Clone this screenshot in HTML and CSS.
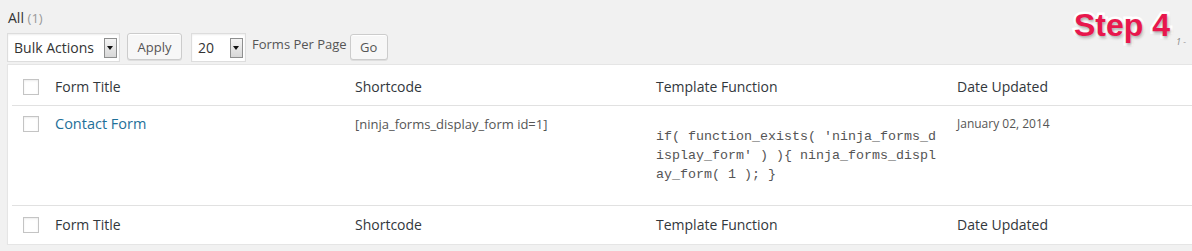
FILE: index.html
```html
<!DOCTYPE html>
<html>
<head>
<meta charset="utf-8">
<title>Forms</title>
<link rel="stylesheet" href="styles.css">
</head>
<body>
<div class="wrap">
  <div class="views">All <span class="count">(1)</span></div>

  <div class="tablenav">
    <div class="select bulk"><span>Bulk Actions</span><i class="drop"></i></div>
    <button class="button apply" type="button">Apply</button>
    <div class="select per-page"><span>20</span><i class="drop"></i></div>
    <span class="per-label">Forms Per Page</span>
    <button class="button go" type="button">Go</button>
  </div>

  <div class="step">Step 4</div>
  <span class="displaying">1 -</span>

  <div class="card">
    <table class="list">
      <colgroup>
        <col class="c-check">
        <col class="c-title">
        <col class="c-short">
        <col class="c-func">
        <col class="c-date">
      </colgroup>
      <thead>
        <tr>
          <th class="check"><span class="box"></span></th>
          <th>Form Title</th>
          <th>Shortcode</th>
          <th>Template Function</th>
          <th>Date Updated</th>
        </tr>
      </thead>
      <tbody>
        <tr>
          <td class="check"><span class="box"></span></td>
          <td><a class="title" href="#">Contact Form</a></td>
          <td class="short">[ninja_forms_display_form id=1]</td>
          <td><code class="func">if( function_exists( 'ninja_forms_display_form' ) ){ ninja_forms_display_form( 1 ); }</code></td>
          <td class="date">January 02, 2014</td>
        </tr>
      </tbody>
      <tfoot>
        <tr>
          <th class="check"><span class="box"></span></th>
          <th>Form Title</th>
          <th>Shortcode</th>
          <th>Template Function</th>
          <th>Date Updated</th>
        </tr>
      </tfoot>
    </table>
  </div>
</div>
</body>
</html>
```

FILE: styles.css
```css
html { overflow: hidden; }
body { margin: 0; background: #f1f1f1; color: #444; font: 13px/18px "Open Sans", "Liberation Sans", sans-serif; }
.wrap { position: relative; padding: 9px 0 0 7px; }

.views { margin-left: 1px; height: 24px; color: #333; font-size: 14px; line-height: 18px; }
.views .count { color: #999; font-size: 13px; }

.tablenav { display: flex; align-items: flex-start; height: 31px; }
.select { box-sizing: border-box; display: flex; align-items: center; justify-content: space-between; height: 29px; padding: 0 2px 0 6px; background: #fff; border: 1px solid #ddd; box-shadow: inset 0 1px 2px rgba(0,0,0,.07); color: #333; font-size: 14px; }
.select.bulk { width: 113px; }
.select.per-page { width: 55px; margin-left: 9px; }
.drop { box-sizing: border-box; position: relative; width: 13px; height: 20px; border: 1px solid #8e8f8f; background: linear-gradient(#f4f4f4, #d8d8d8); }
.drop::after { content: ""; position: absolute; left: 2px; top: 7px; border-left: 3.5px solid transparent; border-right: 3.5px solid transparent; border-top: 4px solid #111; }
.button { box-sizing: border-box; height: 27px; padding: 0 9px; background: #f7f7f7; border: 1px solid #ccc; border-radius: 3px; box-shadow: inset 0 1px 0 #fff, 0 1px 0 rgba(0,0,0,.08); color: #555; font: 13px/24px "Open Sans", "Liberation Sans", sans-serif; }
.button.apply { width: 55px; margin-left: 7px; }
.button.go { width: 38px; height: 26px; margin: 1px 0 0 3px; }
.per-label { margin: 2px 0 0 6px; color: #555; font-size: 13px; line-height: 18px; }

.step { position: absolute; left: 1074px; top: 7px; color: #e8174d; font: bold 32px/36px "Liberation Sans", Arial, sans-serif; -webkit-text-stroke: 5px #fff; paint-order: stroke fill; text-shadow: 1px 2px 3px rgba(0,0,0,.35); }
.displaying { position: absolute; left: 1176px; top: 33px; color: #888; font-size: 9px; font-style: italic; }

.card { width: 1240px; padding-left: 4px; background: #fff; border: 1px solid #e5e5e5; box-shadow: 0 1px 1px rgba(0,0,0,.04); }
.list { table-layout: fixed; width: 1236px; border-spacing: 0; }
.list col.c-check { width: 33px; }
.list col.c-title { width: 300px; }
.list col.c-short { width: 301px; }
.list col.c-func { width: 301px; }
.list th { padding: 0 10px; height: 40px; text-align: left; font-weight: normal; color: #32373c; font-size: 14px; }
.list thead th { height: 36px; padding-top: 4px; border-bottom: 1px solid #e1e1e1; }
.list tfoot th { height: 38px; border-top: 1px solid #e1e1e1; }
.list td { padding: 9px 10px 0; vertical-align: top; color: #555; }
.list .check { padding-left: 11px; padding-right: 0; }
.list td.check { padding-top: 10px; }
.box { display: block; box-sizing: border-box; width: 16px; height: 16px; border: 1px solid #c4c4c4; background: #fff; box-shadow: inset 0 1px 2px rgba(0,0,0,.08); }

.title { color: #1f7099; font-size: 14.5px; text-decoration: none; }
.short { font-size: 13px; }
.date { font-size: 12px; }
.func { display: block; max-width: 35ch; margin: 12px 0 21px; color: #555; font: 13.33px/19px "Liberation Mono", "Courier New", monospace; word-break: break-all; }
```
